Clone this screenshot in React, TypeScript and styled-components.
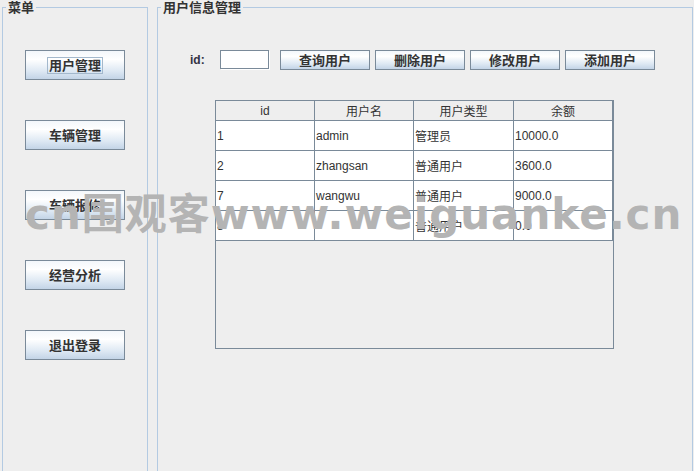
import React from "react";
import styled, { createGlobalStyle } from "styled-components";

const Global = createGlobalStyle`
  html, body { margin: 0; padding: 0; background: #eeeeee; }
  #root { width: 694px; height: 471px; overflow: hidden; }
  * { box-sizing: border-box; }
`;

const CJK = `"Liberation Sans", "Noto Sans CJK SC", sans-serif`;

const Frame = styled.div`
  position: relative;
  width: 694px;
  height: 471px;
  display: flex;
  gap: 9px;
  padding-left: 2px;
  background: #eeeeee;
  font-family: ${CJK};
  color: #333333;
`;

const Group = styled.fieldset<{ $w: number }>`
  margin: 0;
  padding: 0;
  width: ${(p) => p.$w}px;
  height: 500px;
  border: 1px solid #b3cae2;
  min-width: 0;
  display: flex;
  flex-direction: column;
`;

const Legend = styled.legend`
  margin-left: 3px;
  padding: 0 2px;
  font-size: 13px;
  font-weight: bold;
  line-height: 15px;
  color: #333333;
`;

const Menu = styled.div`
  display: flex;
  flex-direction: column;
  gap: 40px;
  padding: 35px 0 0 22px;
`;

const Btn = styled.button<{ $w: number; $h: number }>`
  width: ${(p) => p.$w}px;
  height: ${(p) => p.$h}px;
  padding: 0;
  margin: 0;
  border: 1px solid #7a8a99;
  background: linear-gradient(to bottom, #f3f7fb 0%, #ffffff 30%, #dde8f3 72%, #c3d4e7 100%);
  font-family: ${CJK};
  font-weight: bold;
  font-size: 13px;
  color: #333333;
  display: flex;
  align-items: center;
  justify-content: center;
  cursor: default;
`;

const BtnLabel = styled.span<{ $focus?: boolean }>`
  display: inline-block;
  line-height: 15px;
  padding: 0 1px;
  border: 1px solid ${(p) => (p.$focus ? "#a3b8cc" : "transparent")};
`;

const Content = styled.div`
  display: flex;
  flex-direction: column;
  padding: 35px 0 0 32px;
`;

const Toolbar = styled.div`
  display: flex;
  align-items: flex-start;
  height: 20px;
`;

const IdLabel = styled.label`
  width: 30px;
  height: 20px;
  line-height: 20px;
  font-family: "Liberation Sans", sans-serif;
  font-weight: bold;
  font-size: 12px;
  color: #333344;
`;

const Field = styled.div`
  width: 49px;
  height: 19px;
  background: #ffffff;
  border: 1px solid #7a8a99;
  box-shadow: 1px 1px 0 #ffffff;
  margin-right: 11px;
`;

const Buttons = styled.div`
  display: flex;
  gap: 5px;
`;

const Scroll = styled.div`
  margin: 30px 0 0 25px;
  width: 399px;
  height: 249px;
  border: 1px solid #7a8a99;
  background: #eeeeee;
  display: flex;
  flex-direction: column;
`;

const Row = styled.div<{ $head?: boolean }>`
  display: grid;
  grid-template-columns: 99px 99px 100px 99px;
  height: ${(p) => (p.$head ? 20 : 30)}px;
  background: ${(p) => (p.$head ? "#eeeeee" : "#ffffff")};
  border-bottom: 1px solid #7a8a99;
`;

const Cell = styled.div<{ $head?: boolean }>`
  border-right: 1px solid #7a8a99;
  display: flex;
  align-items: center;
  justify-content: ${(p) => (p.$head ? "center" : "flex-start")};
  padding-left: ${(p) => (p.$head ? 0 : 1)}px;
  font-size: 12px;
  font-weight: normal;
  color: #333333;
  white-space: nowrap;
  overflow: hidden;
`;

const Watermark = styled.div`
  position: absolute;
  left: 25px;
  top: 185px;
  font-family: "DejaVu Sans", "Noto Sans CJK SC", sans-serif;
  font-weight: bold;
  font-size: 42px;
  letter-spacing: 1px;
  line-height: 60px;
  color: #b4b4b4;
  white-space: nowrap;
  pointer-events: none;
`;

const menu = ["用户管理", "车辆管理", "车辆报修", "经营分析", "退出登录"];
const actions = ["查询用户", "删除用户", "修改用户", "添加用户"];
const headers = ["id", "用户名", "用户类型", "余额"];
const rows = [
  ["1", "admin", "管理员", "10000.0"],
  ["2", "zhangsan", "普通用户", "3600.0"],
  ["7", "wangwu", "普通用户", "9000.0"],
  ["8", "", "普通用户", "0.0"],
];

export default function App() {
  return (
    <>
      <Global />
      <Frame>
        <Group $w={146}>
          <Legend>菜单</Legend>
          <Menu>
            {menu.map((m, i) => (
              <Btn key={m} $w={100} $h={30}>
                <BtnLabel $focus={i === 0}>{m}</BtnLabel>
              </Btn>
            ))}
          </Menu>
        </Group>
        <Group $w={536}>
          <Legend>用户信息管理</Legend>
          <Content>
            <Toolbar>
              <IdLabel>id:</IdLabel>
              <Field />
              <Buttons>
                {actions.map((a) => (
                  <Btn key={a} $w={90} $h={20}>
                    <BtnLabel>{a}</BtnLabel>
                  </Btn>
                ))}
              </Buttons>
            </Toolbar>
            <Scroll>
              <Row $head>
                {headers.map((h) => (
                  <Cell key={h} $head>
                    {h}
                  </Cell>
                ))}
              </Row>
              {rows.map((r) => (
                <Row key={r[0]}>
                  {r.map((c, j) => (
                    <Cell key={j}>{c}</Cell>
                  ))}
                </Row>
              ))}
            </Scroll>
          </Content>
        </Group>
        <Watermark>cn围观客www.weiguanke.cn</Watermark>
      </Frame>
    </>
  );
}
